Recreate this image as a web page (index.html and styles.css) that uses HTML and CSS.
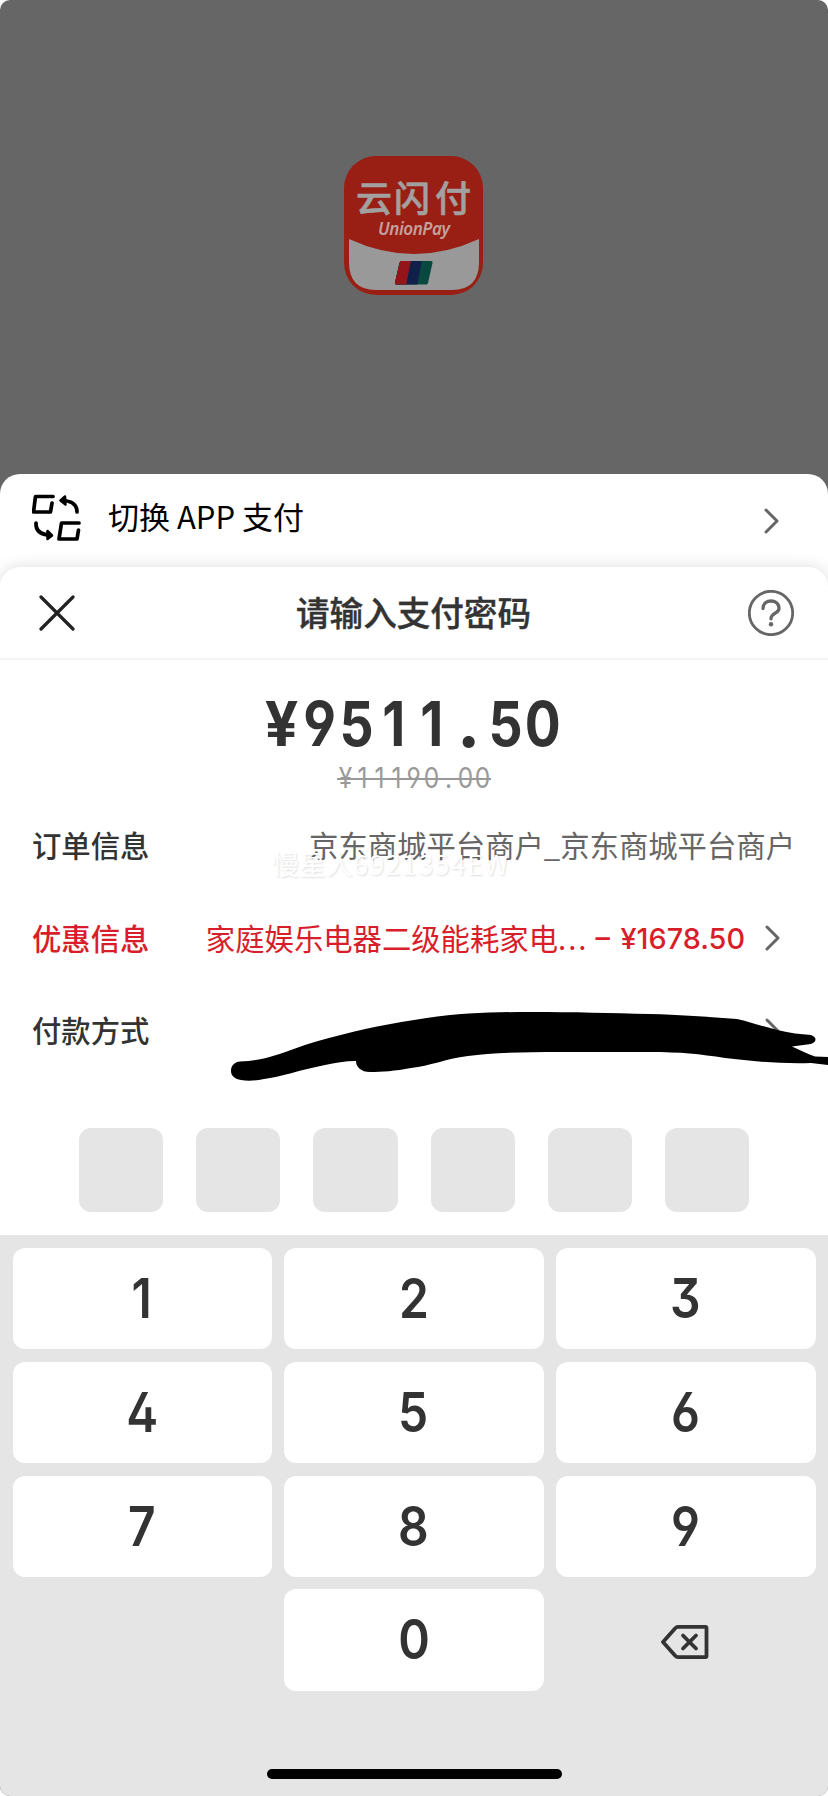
FILE: index.html
```html
<!DOCTYPE html>
<html lang="zh-CN">
<head>
<meta charset="utf-8">
<title>支付</title>
<link rel="stylesheet" href="styles.css">
</head>
<body>
<main class="screen">
  <section class="backdrop">
    <svg class="logo" viewBox="0 0 139 139">
      <rect width="139" height="139" rx="32" fill="#991f14"/>
      <path d="M5 83Q70 113 135 83V106Q135 134 108 134H32Q5 134 5 106Z" fill="#999"/>
      <text class="logo-cn" x="12 50 91" y="56">云闪付</text>
      <text class="logo-en" x="34" y="79" textLength="72">UnionPay</text>
      <clipPath id="card"><path d="M58 105H87Q89 105 88.500 107L84 127Q83.500 128.500 82 128.500H53Q50.500 128.500 51 126.500L55.500 107Q56 105 58 105Z"/></clipPath>
      <g clip-path="url(#card)">
        <rect x="48" y="104" width="44" height="26" fill="#07493f"/>
        <path d="M48 104H78L73 130H48Z" fill="#10204a"/>
        <path d="M48 104H67L62 130H48Z" fill="#93151a"/>
      </g>
    </svg>
  </section>

  <section class="switch-sheet">
    <svg class="switch-icon" viewBox="0 0 50 50" fill="none" stroke="#000" stroke-width="3.700" stroke-linecap="round" stroke-linejoin="round">
      <path d="M21 3.500H3.500L1.500 19H18.500L20 10"/>
      <path d="M47 30H29.500L27 46H45L46.500 37"/>
      <path d="M45 19Q45 8 30 7.500"/><path d="M33 3.500L28.500 7.500L33.500 11.500Z" fill="#000" stroke-width="2.500"/>
      <path d="M4 30Q3.500 41 17 42"/><path d="M15.500 38L20 42.500L15.500 46Z" fill="#000" stroke-width="2.500"/>
    </svg>
    <span class="switch-label">切换 APP 支付</span>
    <svg class="chevron" viewBox="0 0 16 26"><path d="M2 2L13 13L2 24"/></svg>
  </section>

  <section class="pay-sheet">
    <header class="pay-head">
      <svg class="close" viewBox="0 0 36 36"><path d="M2 2L34 34M34 2L2 34"/></svg>
      <h1 class="title">请输入支付密码</h1>
      <svg class="help" viewBox="0 0 46 46"><circle cx="23" cy="23" r="21.700"/><path d="M15 18.500C15 8.500 31 8.500 31 18.500C31 23.500 23 23 23 28.800"/><circle class="dot" cx="23" cy="34.200" r="2.200"/></svg>
    </header>

    <div class="amount"><span class="yen">¥</span><span>9</span><span>5</span><span>1</span><span>1</span><span class="point">.</span><span>5</span><span>0</span></div>
    <div class="original"><span>¥</span><span>1</span><span>1</span><span>1</span><span>9</span><span>0</span><span>.</span><span>0</span><span>0</span></div>

    <div class="rows">
      <div class="row">
        <span class="label">订单信息</span>
        <span class="value">京东商城平台商户_京东商城平台商户</span>
        <span class="watermark">慢星人<span class="code">6921354EW</span></span>
      </div>
      <div class="row promo">
        <span class="label">优惠信息</span>
        <span class="value">家庭娱乐电器二级能耗家电<span class="dots">...</span></span>
        <span class="discount">– ¥1678.50</span>
        <svg class="chevron" viewBox="0 0 16 26"><path d="M2 2L13 13L2 24"/></svg>
      </div>
      <div class="row">
        <span class="label">付款方式</span>
        <svg class="chevron push" viewBox="0 0 16 26"><path d="M2 2L13 13L2 24"/></svg>
        <svg class="scribble" viewBox="228 1008 600 76"><path d="M231 1070C231 1064 235 1061 240 1060.500C250 1060 258 1059 266 1057C285 1052 300 1045 318 1040C350 1031 380 1024 414 1019C455 1012 490 1011 530 1011C575 1011 610 1012 650 1013C685 1014 710 1016 737 1018C755 1022 775 1030 795 1032.500L811 1034C817 1036 817 1041 811 1043L792 1045.500C800 1049 808 1053 815 1055.500L828 1056V1064L811 1062C780 1063 750 1060 725 1057C700 1053 680 1051 650 1051H560C520 1051 490 1052 468 1055C445 1058 430 1065 411 1067C395 1070 382 1071 370 1071C361 1071 356 1066 356 1060C345 1060 335 1062 325 1064C300 1069 280 1076 264 1078C255 1080 247 1080 241 1079C235 1078 231 1075 231 1070Z"/></svg>
      </div>
    </div>

    <div class="pin"><i></i><i></i><i></i><i></i><i></i><i></i></div>
  </section>

  <section class="keypad">
    <div class="keys">
      <b><span>1</span></b><b><span>2</span></b><b><span>3</span></b>
      <b><span>4</span></b><b><span>5</span></b><b><span>6</span></b>
      <b><span>7</span></b><b><span>8</span></b><b><span>9</span></b>
      <b class="blank"></b><b><span>0</span></b>
      <b class="blank"><svg class="delete" viewBox="0 0 48 34" fill="none" stroke="#333" stroke-width="3.800" stroke-linecap="round" stroke-linejoin="round"><path d="M17 1.900H44.500Q45.500 1.900 45.500 3V31Q45.500 32.100 44.500 32.100H17Q15.500 32.100 14 30.500L2 17L14 3.500Q15.500 1.900 17 1.900Z"/><path d="M22 10.500L35 23.500M35 10.500L22 23.500"/></svg></b>
    </div>
    <div class="home-bar"></div>
  </section>
</main>
</body>
</html>
```

FILE: styles.css
```css
* { box-sizing: border-box; }

body {
  margin: 0;
  background: #fff;
  color: #333;
  font-family: "Noto Sans CJK SC", sans-serif;
}

.screen {
  display: flex;
  flex-direction: column;
  width: 828px;
  height: 1796px;
  overflow: hidden;
  background: #666;
  border-radius: 10px;
}

.backdrop {
  flex: none;
  display: flex;
  justify-content: center;
  height: 474px;
  padding: 156px 2px 0 0;
}

.logo { width: 139px; height: 139px; }
.logo-cn { font-size: 36px; font-weight: 500; fill: #a3a0a0; stroke: #a3a0a0; stroke-width: .6; }
.logo-en { font: italic 600 17px "Noto Sans", sans-serif; fill: #c5a09c; }

.switch-sheet {
  flex: none;
  display: flex;
  align-items: center;
  height: 113px;
  padding: 0 48px 20px 32px;
  background: #fff;
  border-radius: 20px 20px 0 0;
}

.switch-icon { width: 50px; height: 50px; margin-top: -6px; }
.switch-label { flex: 1; margin: -10px 0 0 26px; font-size: 31px; color: #000; }

.chevron {
  flex: none;
  width: 16px;
  height: 26px;
  fill: none;
  stroke: #666;
  stroke-width: 3;
  stroke-linecap: round;
  stroke-linejoin: round;
}

.pay-sheet {
  flex: none;
  height: 668px;
  margin-top: -20px;
  background: #fff;
  border-radius: 20px 20px 0 0;
  box-shadow: 0 0 16px rgba(0, 0, 0, .14);
}

.pay-head {
  display: flex;
  align-items: center;
  justify-content: space-between;
  height: 93px;
  padding: 1px 34px 0 39px;
  border-bottom: 2px solid #f4f4f4;
}

.close { width: 36px; height: 36px; fill: none; stroke: #222; stroke-width: 3.200; stroke-linecap: round; }
.title { margin: -2px 0 0 4px; font-size: 33.600px; font-weight: 500; line-height: 40px; -webkit-text-stroke: .4px #333; }
.help { width: 46px; height: 46px; fill: none; stroke: #666; stroke-width: 2.800; stroke-linecap: round; }
.help path { stroke-width: 3.300; }
.help .dot { fill: #666; stroke: none; }

.amount, .original {
  display: flex;
  justify-content: center;
  font-family: Inter, sans-serif;
  font-feature-settings: "ss01";
}
.amount { margin-top: 34px; padding-right: 3px; font-size: 62px; font-weight: 700; line-height: 60px; }
.amount span { width: 37.300px; display: flex; justify-content: center; transform: scaleX(.86); }
.amount .yen { transform: scaleX(.95); }
.amount .point { transform: scale(1.150); transform-origin: 50% 46px; }
.original {
  width: 154px;
  height: 36px;
  margin: 6px auto 0;
  font-size: 28.500px;
  line-height: 36px;
  color: #999;
  background: linear-gradient(#999, #999) center 18px / 100% 2px no-repeat;
}
.original span { width: 17.100px; display: flex; justify-content: center; transform: scaleX(.86); }

.rows { margin-top: 1.500px; }
.row {
  position: relative;
  display: flex;
  align-items: center;
  height: 92.700px;
  padding: 0 33px 0 32px;
  font-size: 29.350px;
}
.label { font-weight: 500; }
.value { margin-left: auto; color: #666; white-space: nowrap; }
.watermark {
  position: absolute;
  left: 272px;
  top: 46px;
  font-size: 27px;
  line-height: 40px;
  color: #fff;
  text-shadow: 1px 1px 2px rgba(0, 0, 0, .13);
}
.code { letter-spacing: 1.300px; }
.promo { padding-right: 47px; color: #d81e2a; }
.promo .value { color: inherit; }
.dots { letter-spacing: 2px; }
.discount { margin: 3px 20px 0 7px; font-family: Inter, sans-serif; font-weight: 500; font-size: 28.800px; word-spacing: 3px; }
.promo .chevron { margin-top: 3px; }
.row .push { margin: 4px 14px 0 auto; }
.scribble { position: absolute; right: 0; top: 26.500px; width: 600px; height: 76px; }

.pin { display: flex; justify-content: center; gap: 33px; margin-top: 52px; }
.pin i { width: 84.200px; height: 84px; background: #e5e5e5; border-radius: 12px; }

.keypad { flex: 1; padding: 13px 12.500px 0; background: #e5e5e5; z-index: 1; }
.keys {
  display: grid;
  grid-template-columns: repeat(3, 1fr);
  grid-auto-rows: 101.200px;
  gap: 12.600px 12.300px;
}
.keys b {
  display: flex;
  align-items: center;
  justify-content: center;
  padding-right: 1px;
  background: #fff;
  border-radius: 12px;
  font: 600 54.500px/64px Inter, sans-serif;
  font-feature-settings: "ss01";
}
.keys span { transform: scaleX(.88); margin-top: -1px; }
.keys .blank { background: none; }
.delete { width: 48px; height: 34px; margin-top: 4px; }
.home-bar { width: 295px; height: 10px; margin: 78px auto 0; border-radius: 5px; background: #000; }
```
